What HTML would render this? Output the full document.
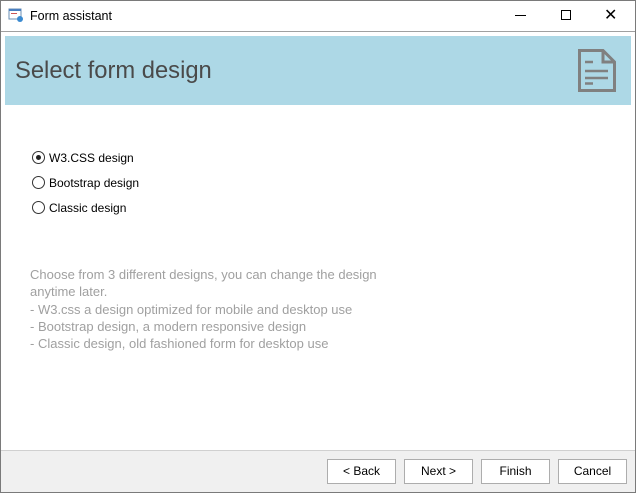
<!DOCTYPE html><html><head><style>
body{margin:0;width:636px;height:493px;overflow:hidden;background:#fff;font-family:"Liberation Sans",sans-serif;position:relative}
.win{position:absolute;left:0;top:0;width:634px;height:491px;border:1px solid #7a7a7a}
.t{position:absolute;font-size:12px;color:#000}
.btn{position:absolute;top:459px;width:67px;height:23px;border:1px solid #adadad;background:#fff;font-size:12px;text-align:center;line-height:23px;color:#000}
.r{position:absolute;left:32px;width:11px;height:11px;border:1px solid #333;border-radius:50%;background:#fff}
.g{position:absolute;left:30px;font-size:13px;color:#a0a0a0}
</style></head><body><div class="win"></div>
<svg style="position:absolute;left:8px;top:8px" width="16" height="14"><rect x="1" y="1" width="12" height="10" fill="#fff" stroke="#6a8fb5"/><rect x="1" y="1" width="12" height="2" fill="#4a7fc0"/><rect x="3" y="5" width="6" height="1" fill="#c55"/><circle cx="12" cy="11" r="3" fill="#3a8ad0"/></svg>
<div class="t" style="left:30px;top:9px;font-size:12.5px">Form assistant</div>
<div style="position:absolute;left:515px;top:15px;width:11px;height:1px;background:#000"></div>
<div style="position:absolute;left:561px;top:10px;width:8px;height:8px;border:1px solid #000"></div>
<div class="t" style="left:604px;top:5px;font-size:16px">✕</div>
<div style="position:absolute;left:1px;top:31px;width:634px;height:1px;background:#a0a0a0"></div>
<div style="position:absolute;left:5px;top:36px;width:626px;height:69px;background:#add8e6"></div>
<div style="position:absolute;left:15px;top:57px;font-size:24px;color:#4a4a4a;transform:scaleX(0.99);transform-origin:left">Select form design</div>
<svg style="position:absolute;left:577px;top:48px" width="40" height="46"><path d="M2.5 2.5H26L37.5 14V42.5H2.5Z" fill="none" stroke="#808080" stroke-width="3"/><path d="M26 2.5V14H37.5" fill="none" stroke="#808080" stroke-width="3"/><path d="M8 14h8M8 23h23M8 30h23M8 35.5h8" stroke="#808080" stroke-width="2.5"/></svg>
<div class="r" style="top:151px"><div style="position:absolute;left:3px;top:3px;width:5px;height:5px;border-radius:50%;background:#222"></div></div>
<div class="t" style="left:49px;top:151px">W3.CSS design</div>
<div class="r" style="top:176px"></div><div class="t" style="left:49px;top:176px">Bootstrap design</div>
<div class="r" style="top:201px"></div><div class="t" style="left:49px;top:201px">Classic design</div>
<div class="g" style="top:267px">Choose from 3 different designs, you can change the design</div>
<div class="g" style="top:284px">anytime later.</div>
<div class="g" style="top:302px">- W3.css a design optimized for mobile and desktop use</div>
<div class="g" style="top:319px">- Bootstrap design, a modern responsive design</div>
<div class="g" style="top:336px">- Classic design, old fashioned form for desktop use</div>
<div style="position:absolute;left:1px;top:450px;width:634px;height:41px;background:#f0f0f0;border-top:1px solid #d0d0d0"></div>
<div class="btn" style="left:327px">&lt; Back</div>
<div class="btn" style="left:404px">Next &gt;</div>
<div class="btn" style="left:481px">Finish</div>
<div class="btn" style="left:558px">Cancel</div>
</body></html>
